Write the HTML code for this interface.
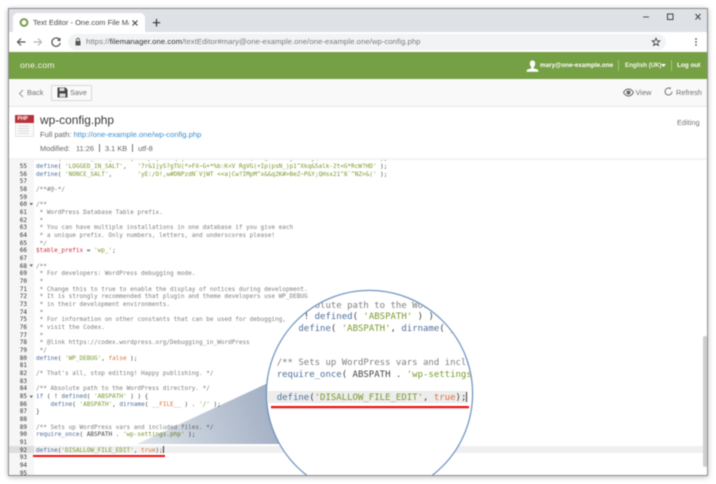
<!DOCTYPE html>
<html><head><meta charset="utf-8">
<style>
html,body{margin:0;padding:0;background:#fff}
#root{position:relative;width:716px;height:484px;overflow:hidden;background:#fff;font-family:"Liberation Sans",sans-serif;filter:blur(.45px)}
#win{position:absolute;left:9px;top:9px;width:698px;height:466px;background:#fff;overflow:hidden;box-shadow:0 0 0 1px #8e8e8e,0 1px 5px 1px rgba(0,0,0,.28)}
.a{position:absolute;white-space:nowrap}
pre{margin:0;position:absolute;font-family:"DejaVu Sans Mono","Liberation Mono",monospace}
#code{left:36px;top:155.2px;font-size:6.03px;line-height:7.67px;color:#444}
#nums{left:12px;width:15px;top:155.2px;text-align:right;font-size:6.03px;line-height:7.67px;color:#333}
.c{color:#808080}.d{color:#4f6f9c}.s{color:#7a9a2e}.o{color:#de7036}.r{color:#c9303c}
#mag pre{font-size:9px;line-height:11.5px;color:#444}
</style></head><body>
<div id="root">
<div id="win"></div>

<!-- tab strip -->
<div class="a" style="left:9px;top:9px;width:698px;height:23px;background:#dee1e6"></div>
<div class="a" style="left:13px;top:13px;width:132px;height:19px;background:#fff;border-radius:5px 5px 0 0"></div>
<svg class="a" style="left:19px;top:17px" width="11" height="11"><circle cx="5" cy="5.500" r="3.400" fill="none" stroke="#7a9a50" stroke-width="2"/></svg>
<span class="a" style="left:33px;top:17px;font-size:7.500px;line-height:11px;color:#4a4a4a;width:96px;overflow:hidden">Text Editor - One.com File Manager</span>
<svg class="a" style="left:130px;top:18px" width="10" height="10"><path d="M2.500 2.500l5 5M7.500 2.500l-5 5" stroke="#444" stroke-width="1.100"/></svg>
<svg class="a" style="left:151px;top:17px" width="11" height="11"><path d="M5.500 2v7.500M1.800 5.700h7.400" stroke="#333" stroke-width="1.200"/></svg>
<svg class="a" style="left:640px;top:9px" width="66" height="23"><path d="M3 8h6" stroke="#555" stroke-width="1"/><rect x="27.500" y="5" width="5.500" height="5.500" fill="none" stroke="#444" stroke-width="1"/><path d="M55.500 5l5 5.500M60.500 5l-5 5.500" stroke="#444" stroke-width="1"/></svg>

<!-- address bar -->
<div class="a" style="left:9px;top:32px;width:698px;height:20px;background:#fff"></div>
<svg class="a" style="left:15px;top:36px" width="12" height="12"><path d="M10.500 6H2.500M6 2.500L2.500 6 6 9.500" fill="none" stroke="#555" stroke-width="1.200"/></svg>
<svg class="a" style="left:32px;top:36px" width="12" height="12"><path d="M1.500 6h8M6 2.500L9.500 6 6 9.500" fill="none" stroke="#b5b5b5" stroke-width="1.200"/></svg>
<svg class="a" style="left:50px;top:36px" width="12" height="12"><path d="M9.800 4.200A4.200 4.200 0 1 0 10.200 7" fill="none" stroke="#555" stroke-width="1.200"/><path d="M10.500 1.500v3.500H7z" fill="#555"/></svg>
<div class="a" style="left:68px;top:34px;width:598px;height:16px;background:#f1f3f4;border-radius:8px"></div>
<svg class="a" style="left:74px;top:37px" width="8" height="10"><rect x="1.500" y="4" width="5" height="4.500" fill="#555"/><path d="M2.500 4V2.800a1.500 1.500 0 0 1 3 0V4" fill="none" stroke="#555" stroke-width=".8"/></svg>
<span class="a" style="left:86px;top:36px;font-size:7.700px;line-height:12px;color:#7a7a7a;letter-spacing:.06px">https://<span style="color:#333">filemanager.one.com</span>/textEditor#mary@one-example.one/one-example.one/wp-config.php</span>
<svg class="a" style="left:651px;top:37px" width="10" height="10"><path d="M5 1.200l1.100 2.500 2.700.2-2.100 1.800.7 2.700L5 7 2.600 8.400l.7-2.700L1.200 3.900l2.700-.2z" fill="none" stroke="#444" stroke-width=".9"/></svg>
<svg class="a" style="left:694px;top:37px" width="4" height="11"><circle cx="2" cy="2" r=".9" fill="#555"/><circle cx="2" cy="5" r=".9" fill="#555"/><circle cx="2" cy="8" r=".9" fill="#555"/></svg>

<!-- green bar -->
<div class="a" style="left:9px;top:52px;width:698px;height:27px;background:#76a044"></div>
<span class="a" style="left:20px;top:58px;font-size:8.700px;line-height:14px;color:#f4f8ee;letter-spacing:.2px">one.com</span>
<svg class="a" style="left:526px;top:60px" width="13" height="12"><path d="M6.500 0.500c1.800 0 2.700 1.300 2.700 3s-.9 3.300-1.600 3.800v1l3.900 1.200c.5.200.8.600.8 1.200v1H.7v-1c0-.6.300-1 .8-1.200l3.900-1.200v-1c-.7-.5-1.600-2.100-1.600-3.800s.9-3 2.700-3z" fill="#fff"/></svg>
<span class="a" style="left:540px;top:60px;font-size:6.350px;line-height:11px;font-weight:bold;color:#fff">mary@one-example.one</span>
<div class="a" style="left:618px;top:60px;width:1px;height:11px;background:#a5c27f"></div>
<span class="a" style="left:625px;top:60px;font-size:6.100px;line-height:11px;font-weight:bold;color:#f4f7ee">English (UK)</span>
<svg class="a" style="left:661px;top:64px" width="5" height="3"><path d="M0 0h5L2.500 3z" fill="#fff"/></svg>
<div class="a" style="left:671px;top:60px;width:1px;height:11px;background:#a5c27f"></div>
<span class="a" style="left:677px;top:60px;font-size:6.400px;line-height:11px;font-weight:bold;color:#fff">Log out</span>

<!-- toolbar -->
<div class="a" style="left:9px;top:79px;width:698px;height:28px;background:#f9f9f9;border-bottom:1px solid #e7e7e7;box-sizing:border-box"></div>
<svg class="a" style="left:18px;top:89px" width="6" height="9"><path d="M5 1L1.500 4.500 5 8" fill="none" stroke="#9a9a9a" stroke-width="1"/></svg>
<span class="a" style="left:27px;top:87px;font-size:7.400px;line-height:12px;color:#707070">Back</span>
<div class="a" style="left:51px;top:85px;width:41px;height:16px;box-sizing:border-box;border:1px solid #d9d9d9;background:#fafafa;border-radius:1px"></div>
<svg class="a" style="left:57px;top:87px" width="11" height="11"><path d="M.5.500h8l2 2v8H.5z" fill="#444"/><rect x="2.500" y="1" width="5" height="3" fill="#ddd"/><rect x="2.500" y="6.500" width="6" height="3.500" fill="#ddd"/></svg>
<span class="a" style="left:70px;top:87px;font-size:7.400px;line-height:12px;color:#707070">Save</span>
<svg class="a" style="left:623px;top:88px" width="11" height="9"><path d="M.5 4.500C2 2 3.600 1 5.500 1s3.500 1 5 3.500C9 7 7.400 8 5.500 8S2 7 .5 4.500z" fill="none" stroke="#666" stroke-width="1"/><circle cx="5.500" cy="4.500" r="2" fill="#666"/></svg>
<span class="a" style="left:635.500px;top:87px;font-size:7.400px;line-height:12px;color:#707070">View</span>
<svg class="a" style="left:664px;top:87px" width="9" height="10"><path d="M5.500 1.200A3.500 3.500 0 1 0 8 4.700" fill="none" stroke="#777" stroke-width="1"/><path d="M5.500 0v2.500l1.800-1.200z" fill="#777"/></svg>
<span class="a" style="left:676px;top:87px;font-size:7.400px;line-height:12px;color:#707070">Refresh</span>

<!-- file header -->
<div class="a" style="left:15px;top:115px;width:19px;height:22px;box-sizing:border-box;border:1px solid #e4e4e4;background:#fafafa"></div>
<div class="a" style="left:15px;top:115px;width:19px;height:8px;background:#b8313a;color:#fff;font-size:5px;line-height:8px;font-weight:bold;text-indent:2.500px">PHP</div>
<svg class="a" style="left:18px;top:125px" width="13" height="10"><path d="M0 1h11M0 3.500h11M0 6h11M0 8.500h11" stroke="#dcdcdc" stroke-width="1"/></svg>
<span class="a" style="left:40px;top:112px;font-size:11.900px;line-height:17px;color:#3a3a3a">wp-config.php</span>
<span class="a" style="left:40px;top:129px;font-size:7.650px;line-height:11px;color:#666">Full path: <span style="color:#3f8fce">http://one-example.one/wp-config.php</span></span>
<span class="a" style="left:40px;top:143px;font-size:7.400px;line-height:11px;color:#666">Modified:</span>
<span class="a" style="left:76px;top:143px;font-size:7.400px;line-height:11px;color:#666">11:26</span>
<div class="a" style="left:99px;top:144px;width:1px;height:9px;background:#777"></div>
<span class="a" style="left:105px;top:143px;font-size:7.400px;line-height:11px;color:#666">3.1 KB</span>
<div class="a" style="left:132px;top:144px;width:1px;height:9px;background:#777"></div>
<span class="a" style="left:138px;top:143px;font-size:7.400px;line-height:11px;color:#666">utf-8</span>
<span class="a" style="left:677px;top:117px;font-size:7.400px;line-height:11px;color:#777">Editing</span>

<!-- editor -->
<div class="a" style="left:9px;top:158px;width:698px;height:317px;background:#fff;overflow:hidden"></div>
<div class="a" style="left:9px;top:158px;width:25px;height:317px;background:#f6f6f6"></div>
<div class="a" style="left:9px;top:445.500px;width:25px;height:7.700px;background:#dedede"></div>
<div class="a" style="left:34px;top:445.500px;width:669px;height:7.700px;background:#f0f0f0"></div>
<div id="clip" class="a" style="left:0;top:158px;width:716px;height:317px;overflow:hidden">
<pre id="nums" style="margin-top:-158px">54
55
56
57
58
59
60
61
62
63
64
65
66
67
68
69
70
71
72
73
74
75
76
77
78
79
80
81
82
83
84
85
86
87
88
89
90
91
92
93
94
95</pre>
<pre id="code" style="margin-top:-158px"><span class="d">define</span>( <span class="s">'SECURE_AUTH_SALT'</span>,  <span class="s">'Xp9]Lm0+qT|vR2a~Hd&gt;YkZ7!nE4uW(sC1@bF^oG6jK-iN3yQ*tA8zV%lM5rD=hU'</span> );
<span class="d">define</span>( <span class="s">'LOGGED_IN_SALT'</span>,   <span class="s">'7r&amp;1]yS?gTU(*&gt;FX~G+*%b:K&lt;V RgVG(+Ip(psN_)p1^Xkq&amp;5alk-2t&lt;G*RcW?HD'</span> );
<span class="d">define</span>( <span class="s">'NONCE_SALT'</span>,       <span class="s">'yE:/O!,w#DNPzdN`V]WT &lt;&lt;a|Cw?IMpM^x&amp;&amp;q2K#&gt;BeZ~P&amp;Y;QHsx21^8`^NZ&gt;&amp;('</span> );

<span class="c">/**#@-*/</span>

<span class="c">/**
 * WordPress Database Table prefix.
 *
 * You can have multiple installations in one database if you give each
 * a unique prefix. Only numbers, letters, and underscores please!
 */</span>
<span class="r">$table_prefix</span> = <span class="s">'wp_'</span>;

<span class="c">/**
 * For developers: WordPress debugging mode.
 *
 * Change this to true to enable the display of notices during development.
 * It is strongly recommended that plugin and theme developers use WP_DEBUG
 * in their development environments.
 *
 * For information on other constants that can be used for debugging,
 * visit the Codex.
 *
 * @link https://codex.wordpress.org/Debugging_in_WordPress
 */</span>
<span class="d">define</span>( <span class="s">'WP_DEBUG'</span>, <span class="o">false</span> );

<span class="c">/* That's all, stop editing! Happy publishing. */</span>

<span class="c">/** Absolute path to the WordPress directory. */</span>
<span class="d">if</span> ( ! <span class="d">defined</span>( <span class="s">'ABSPATH'</span> ) ) {
    <span class="d">define</span>( <span class="s">'ABSPATH'</span>, <span class="d">dirname</span>( <span class="o">__FILE__</span> ) . <span class="s">'/'</span> );
}

<span class="c">/** Sets up WordPress vars and included files. */</span>
<span class="d">require_once</span>( ABSPATH . <span class="s">'wp-settings.php'</span> );

<span class="d">define</span>(<span class="s">'DISALLOW_FILE_EDIT'</span>, <span class="o">true</span>);</pre>
</div>
<div class="a" style="left:9px;top:152px;width:698px;height:6.500px;background:#fff"></div>
<div class="a" style="left:9px;top:158px;width:698px;height:2px;background:#f4f4f4"></div>
<svg class="a" style="left:29px;top:201px" width="5" height="240"><path d="M.5 2h3.500L2.250 4.500zM.5 63.400h3.500l-1.750 2.500zM.5 194.600h3.500l-1.750 2.500z" fill="#666"/></svg>
<div class="a" style="left:163px;top:446px;width:.6px;height:7px;background:#333"></div>
<div class="a" style="left:33px;top:455px;width:132px;height:1.500px;background:#f01010"></div>
<div class="a" style="left:703px;top:336px;width:4px;height:131px;background:#cfcfcf;border-radius:2px"></div>

<!-- wedge -->
<svg class="a" style="left:0;top:0;mix-blend-mode:multiply" width="716" height="484"><defs><linearGradient id="w" x1="137" y1="444" x2="270" y2="400" gradientUnits="userSpaceOnUse"><stop offset="0" stop-color="#dfe4ea"/><stop offset="1" stop-color="#a3b0c4"/></linearGradient></defs><path d="M137 444L268 383H300V444z" fill="url(#w)"/></svg>

<!-- magnifier -->
<div class="a" style="left:0;top:0;width:716px;height:475px;overflow:hidden">
<div id="mag" class="a" style="left:266px;top:290px;width:207px;height:207px;box-sizing:border-box;border:1.500px solid #6a8fbe;border-radius:50%;background:#fff;overflow:hidden;box-shadow:0 0 1px #6a8fbe">
<div class="a" style="left:0;top:100px;width:201px;height:12px;background:#ededed"></div>
<pre style="left:9.700px;top:9.500px"><span class="c">/** Absolute path to the WordPress directory. */</span>
<span class="d">if</span> ( ! <span class="d">defined</span>( <span class="s">'ABSPATH'</span> ) ) {
    <span class="d">define</span>( <span class="s">'ABSPATH'</span>, <span class="d">dirname</span>( <span class="o">__FILE__</span> ) . <span class="s">'/'</span> );


<span class="c">/** Sets up WordPress vars and included files. */</span>
<span class="d">require_once</span>( ABSPATH . <span class="s">'wp-settings.php'</span> );

<span class="d">define</span>(<span class="s">'DISALLOW_FILE_EDIT'</span>, <span class="o">true</span>);</pre>
<div class="a" style="left:199px;top:101px;width:1px;height:10px;background:#444"></div>
<div class="a" style="left:4px;top:114.500px;width:198px;height:2px;background:#f01010;box-shadow:0 1px 1px rgba(0,0,0,.2)"></div>
</div>
</div>

</div>
</body></html>
